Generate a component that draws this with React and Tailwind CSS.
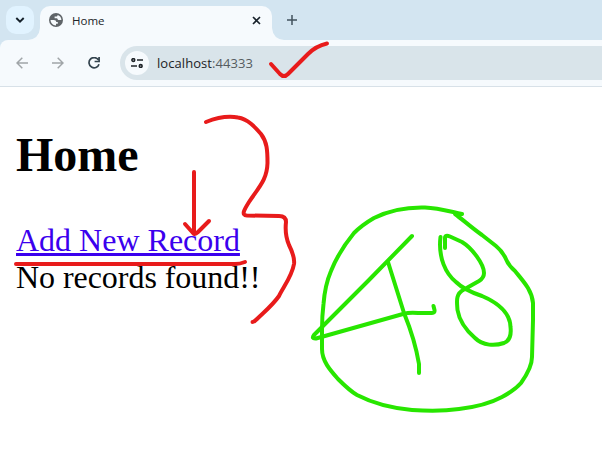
import React from "react";

function TabStrip() {
  return (
    <div className="flex h-10">
      <div className="flex w-10 shrink-0 flex-col">
        <button className="ml-1.5 mt-1.5 flex h-7 w-7 shrink-0 items-center justify-center rounded-[10px] bg-[#e1f3ff]">
          <svg width="10" height="8" viewBox="0 0 10 8" fill="none" stroke="#14202a" strokeWidth="1.9">
            <path d="M1.3 2 5 5.7 8.7 2" />
          </svg>
        </button>
        <svg className="-mt-1.5 ml-auto block shrink-0" width="12" height="12" viewBox="0 0 12 12">
          <path d="M12 0Q11 11 0 12H12Z" fill="#f6fafd" />
        </svg>
      </div>
      <div className="mt-1.5 flex h-[34px] w-[232px] shrink-0 items-center rounded-t-[10px] bg-[#f6fafd] pb-1.5 pl-[9px] pr-[11px]">
        <svg width="14" height="14" viewBox="0 0 14 14">
          <circle cx="7" cy="7" r="7" fill="#5f6468" />
          <path d="M1.500 7H4.800C6.300 7 7.200 7.700 7.200 8.900H8.800V10.700H7V12.400C4 12.400 1.600 10 1.500 7ZM8.600 1.900C8.600 3 8 3.500 6.900 3.500H5.600V5.200H7.800C8.600 5.200 8.500 6.900 9.500 6.900H12.400C12.400 4.300 10.800 2.500 8.600 1.900Z" fill="#f6fafd" />
        </svg>
        <span className="ml-[9px] pt-0.5 font-['Open_Sans',sans-serif] text-[11.5px] leading-4 text-[#202428]">Home</span>
        <svg className="ml-auto" width="9" height="9" viewBox="0 0 9 9" stroke="#18222b" strokeWidth="1.6">
          <path d="m1 1 7 7M8 1 1 8" />
        </svg>
      </div>
      <svg className="block h-3 w-3 shrink-0 self-end" viewBox="0 0 12 12">
        <path d="M0 0Q1 11 12 12H0Z" fill="#f6fafd" />
      </svg>
      <svg className="ml-[3px] mt-[15px]" width="10" height="10" viewBox="0 0 10 10" stroke="#42525d" strokeWidth="1.5">
        <path d="M5 0v10M0 5h10" />
      </svg>
    </div>
  );
}

function Toolbar() {
  return (
    <div className="flex h-[47px] items-center rounded-tl-lg border-b border-[#d8e1e8] bg-[#f6fafd]">
      <div className="ml-4 flex w-[104px] shrink-0 items-center">
        <svg width="12" height="12" viewBox="0 0 12 12" fill="none" stroke="#a0a5a8" strokeWidth="1.5">
          <path d="M12 6H1M6.300.7 1 6l5.300 5.300" />
        </svg>
        <svg className="ml-6" width="12" height="12" viewBox="0 0 12 12" fill="none" stroke="#a0a5a8" strokeWidth="1.5">
          <path d="M0 6h11M5.700.7 11 6l-5.300 5.300" />
        </svg>
        <svg className="ml-6" width="12" height="12" viewBox="0 0 12 12" fill="none" stroke="#33434e" strokeWidth="1.7">
          <path d="M10.400 2.900A5.100 5.100 0 1 0 11 7.200M11.100 0v4.500H6.600" />
        </svg>
      </div>
      <div className="flex h-[34px] flex-1 items-center rounded-l-full bg-[#d9e4ea] pl-[5px]">
        <div className="flex h-6 w-6 items-center justify-center rounded-full bg-[#f6fafd]">
          <svg width="12" height="10" viewBox="0 0 12 10" fill="none" stroke="#1f2429" strokeWidth="1.6">
            <circle cx="2.300" cy="2" r="1.400" />
            <path d="M6 2h6M0 8h6" />
            <circle cx="9.700" cy="8" r="1.400" />
          </svg>
        </div>
        <span className="ml-2 font-['Open_Sans',sans-serif] text-[13px] leading-5 tracking-[0.06px] text-[#555c60]">
          <span className="text-[#1c2226]">localhost</span>:44333
        </span>
      </div>
    </div>
  );
}

function Annotations() {
  return (
    <svg
      className="pointer-events-none absolute inset-0"
      width="602"
      height="474"
      viewBox="0 0 602 474"
      fill="none"
      strokeWidth="4"
      strokeLinecap="round"
      strokeLinejoin="round"
    >
      <g stroke="#e81b1b">
        <path d="M271 64 280 74Q284 78 288 74L308 54Q316 46 327 43.500" />
        <path d="M206 122C216 118 227 115.500 238 117.500C248 119 255 127 261 134C267 142 267.500 150 267.500 163C267 180 259 187 249 202C244 210 241 215 247 215.500L279 216Q286 216 286 222C285 231 286 238 289 245Q295 257 294 264C292 276 284 286 279 296C272 306 264 312 257 319Q254 322 252.500 322" />
        <path d="M194 172V234M185 224 193 233Q195 235 198 232L209 221" />
        <path d="M16 264H235Q240 264 245 262" />
      </g>
      <g stroke="#28e600">
        <path d="M462 214C448 211 438 208 425 207.500C406 207 388 211 374 218Q362 225 354 233C345 244 337 256 331 271Q325 285 323.500 304Q322 316 322 330V349C322 361 330 370 338 379C345 386 350 391 357 395Q380 407 412 410Q439 412 459 409C476 407 489 404 502 397Q515 390 521 383C526 376 532 366 532 357L533 320V303C532 290 523 281 515 271Q508 265 505 257Q501 250 496 246L482 235C472 228 462 219 455 214" />
        <path d="M412 236 368 281 314 335Q311 339 316 338.500L403 314Q410 312 418 313H432Q435 313 434.500 310L433.500 306" />
        <path d="M388 262 404 313Q415 340 419 364V373" />
        <path d="M445 248V238Q445 234.500 450 236.500L462 242C472 248 484 264 484 273Q484 278 479 281L464 289.500C455 294 457 302 457.500 310Q460 325 475 338C483 346 495 346 504 343Q512 340 510.500 327C510 311 496 302 482 296Q464 290 456 282C446 274 438 258 440.500 237" />
      </g>
    </svg>
  );
}

export default function App() {
  return (
    <div className="relative h-[474px] w-[602px] overflow-hidden bg-white">
      <header className="bg-[#d3e5f1]">
        <TabStrip />
        <Toolbar />
      </header>
      <main className="pl-4 pt-10 font-['Liberation_Serif',serif] text-black">
        <h1 className="text-[48px] font-bold leading-[55px]">Home</h1>
        <div className="mt-10 text-[32px] leading-[37px]">
          <a href="#" className="text-[#3b00ee] underline decoration-[3px] underline-offset-2">Add New Record</a>
          <p className="tracking-[-0.05px]">No records found!!</p>
        </div>
      </main>
      <Annotations />
    </div>
  );
}
